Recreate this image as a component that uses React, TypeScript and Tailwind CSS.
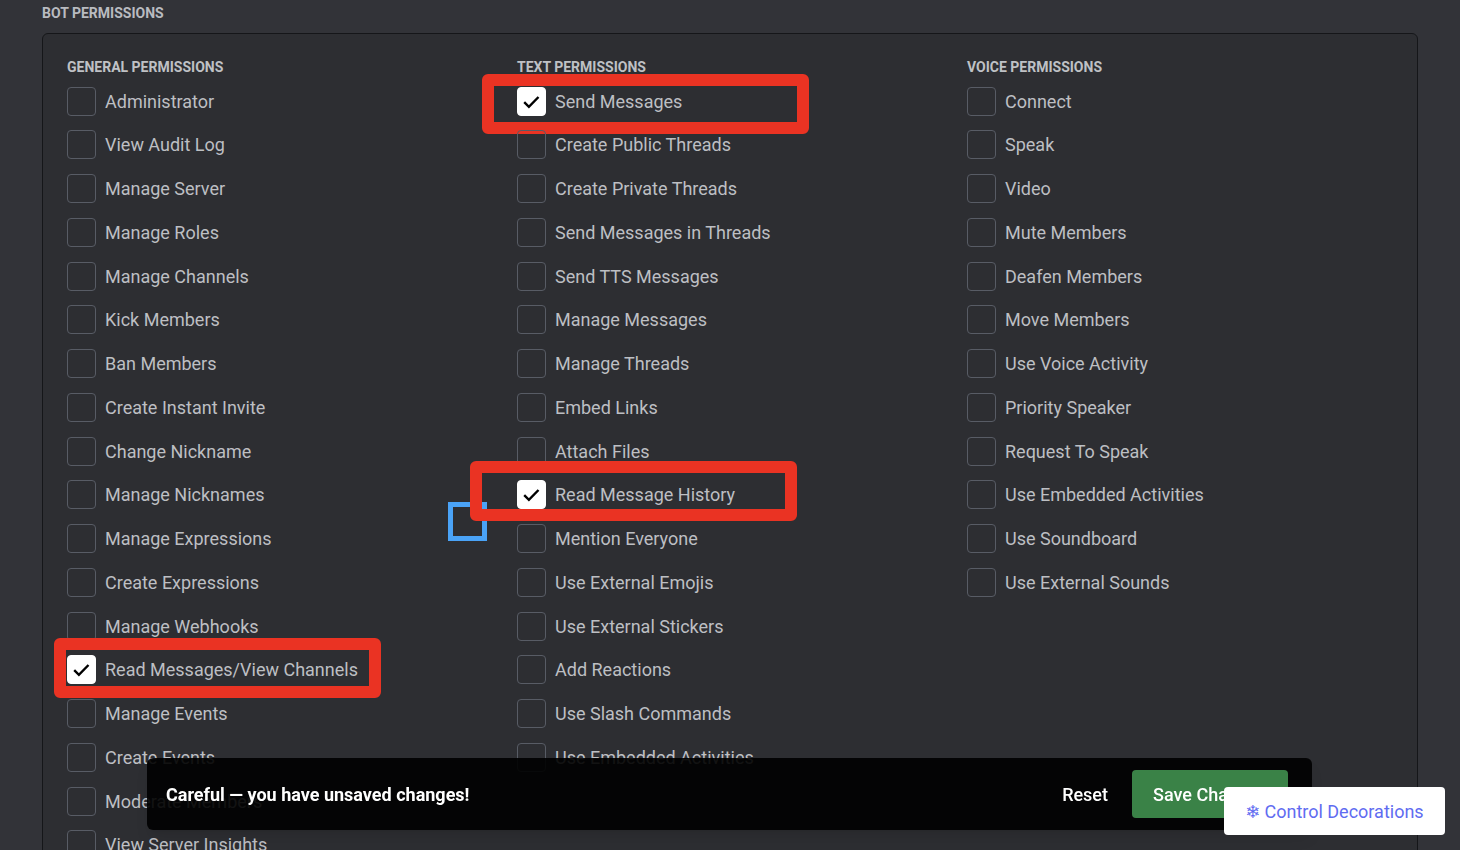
import type { ReactNode } from "react";

type Permission = {
  name: string;
  checked?: boolean;
  marks?: ReactNode;
};

type Group = {
  title: string;
  permissions: Permission[];
};

const frame = "pointer-events-none absolute h-[60px] w-[327px] rounded-md border-[12px] border-[#ea3323]";

const plain = (names: string[]): Permission[] => names.map((name) => ({ name }));

const groups: Group[] = [
  {
    title: "General Permissions",
    permissions: [
      ...plain([
        "Administrator",
        "View Audit Log",
        "Manage Server",
        "Manage Roles",
        "Manage Channels",
        "Kick Members",
        "Ban Members",
        "Create Instant Invite",
        "Change Nickname",
        "Manage Nicknames",
        "Manage Expressions",
        "Create Expressions",
        "Manage Webhooks",
      ]),
      {
        name: "Read Messages/View Channels",
        checked: true,
        marks: <span className={`${frame} -left-[13px] -top-[17px]`} />,
      },
      ...plain(["Manage Events", "Create Events", "Moderate Members", "View Server Insights"]),
    ],
  },
  {
    title: "Text Permissions",
    permissions: [
      {
        name: "Send Messages",
        checked: true,
        marks: <span className={`${frame} -left-[35px] -top-[13px]`} />,
      },
      ...plain([
        "Create Public Threads",
        "Create Private Threads",
        "Send Messages in Threads",
        "Send TTS Messages",
        "Manage Messages",
        "Manage Threads",
        "Embed Links",
        "Attach Files",
      ]),
      {
        name: "Read Message History",
        checked: true,
        marks: (
          <>
            <span className="pointer-events-none absolute -left-[69px] top-[22px] h-[39px] w-[39px] border-[5px] border-[#4aa3f7]" />
            <span className={`${frame} -left-[47px] -top-[19px]`} />
          </>
        ),
      },
      ...plain([
        "Mention Everyone",
        "Use External Emojis",
        "Use External Stickers",
        "Add Reactions",
        "Use Slash Commands",
        "Use Embedded Activities",
      ]),
    ],
  },
  {
    title: "Voice Permissions",
    permissions: plain([
      "Connect",
      "Speak",
      "Video",
      "Mute Members",
      "Deafen Members",
      "Move Members",
      "Use Voice Activity",
      "Priority Speaker",
      "Request To Speak",
      "Use Embedded Activities",
      "Use Soundboard",
      "Use External Sounds",
    ]),
  },
];

function PermissionRow({ name, checked, marks }: Permission) {
  return (
    <li className="relative h-11 nth-[4n+1]:h-[43px]">
      <label className="flex w-fit items-center gap-[9px] text-[18px] leading-[29px] text-[#bdbfc3]">
        <span className="grid h-[29px] w-[29px] shrink-0">
          <input
            type="checkbox"
            defaultChecked={checked}
            className="peer col-start-1 row-start-1 h-[29px] w-[29px] appearance-none rounded border border-[#585c65] checked:border-white checked:bg-white"
          />
          <svg
            viewBox="0 0 29 29"
            className="pointer-events-none invisible col-start-1 row-start-1 h-[29px] w-[29px] peer-checked:visible"
            fill="none"
            stroke="#000"
            strokeWidth="2.4"
            aria-hidden="true"
          >
            <path d="M7.2 15.2 11.9 19.8 21.5 10" />
          </svg>
        </span>
        {name}
      </label>
      {marks}
    </li>
  );
}

export default function App() {
  return (
    <main className="h-screen overflow-hidden bg-[#323338] px-[42px] font-[Roboto,sans-serif]">
      <h2 className="pt-[3px] text-sm leading-5 font-bold text-[#b9bbc0] uppercase">Bot Permissions</h2>
      <section className="mt-[10px] grid grid-cols-3 rounded-md border border-[#151619] bg-[#2d2e32] pt-[23px] pb-6 pl-6">
        {groups.map((group) => (
          <div key={group.title}>
            <h3 className="text-sm leading-5 font-bold text-[#bfc1c5] uppercase">{group.title}</h3>
            <ul className="pt-[10px]">
              {group.permissions.map((permission) => (
                <PermissionRow key={permission.name} {...permission} />
              ))}
            </ul>
          </div>
        ))}
      </section>

      <div className="fixed right-[148px] bottom-5 left-[147px] flex h-[72px] items-center rounded-md bg-black/90 pr-6 pl-[19px] text-[18px] text-white shadow-lg">
        <p className="flex-1 font-bold">Careful — you have unsaved changes!</p>
        <button type="button" className="px-6 font-medium">
          Reset
        </button>
        <button type="button" className="h-12 w-[156px] rounded bg-[#3a8247] font-medium">
          Save Changes
        </button>
      </div>

      <button
        type="button"
        className="fixed right-[15px] bottom-[15px] flex h-12 w-[221px] items-center justify-center gap-1 rounded bg-white text-[18px] text-[#5f6cf1]"
      >
        <span className="font-['DejaVu_Sans']">❄</span> Control Decorations
      </button>
    </main>
  );
}
